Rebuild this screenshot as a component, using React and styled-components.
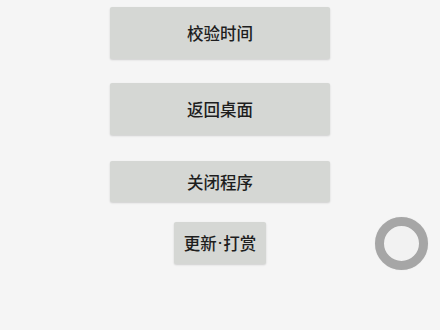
import React from 'react';
import styled, {createGlobalStyle} from 'styled-components';

const Global = createGlobalStyle`
    html, body {
        margin: 0;
        padding: 0;
        background: #f5f5f5;
    }
    body {
        font-family: "Roboto", "Noto Sans CJK SC", sans-serif;
    }
`;

const Page = styled.div`
    position: relative;
    width: 440px;
    height: 330px;
    overflow: hidden;
    background: #f5f5f5;
`;

const Menu = styled.div`
    display: flex;
    flex-direction: column;
    align-items: center;
    padding-top: 7px;
`;

const ActionButton = styled.button`
    display: flex;
    align-items: center;
    justify-content: center;
    width: ${p => p.width}px;
    height: ${p => p.height}px;
    margin-bottom: ${p => p.gap || 0}px;
    padding: 0;
    border: none;
    border-radius: 2px;
    background: #d5d7d4;
    box-shadow: 0 1px 2px rgba(0, 0, 0, 0.16);
    color: #1e1e1e;
    font-family: "Noto Sans CJK SC", sans-serif;
    font-size: 16.5px;
    font-weight: 500;
    cursor: pointer;
`;

const Dot = styled.span`
    font-family: "Roboto", sans-serif;
    margin: 0 1px;
`;

const FloatRing = styled.div`
    position: absolute;
    left: 375px;
    top: 217px;
    width: 53px;
    height: 53px;
    box-sizing: border-box;
    border-radius: 50%;
    border: 9px solid #a6a6a6;
    background: #f2f2f2;
    box-shadow: 0 0 1px rgba(0, 0, 0, 0.15);
`;

export default function App() {
    return (
        <Page>
            <Global/>
            <Menu>
                <ActionButton width={220} height={52} gap={24}>校验时间</ActionButton>
                <ActionButton width={220} height={52} gap={26}>返回桌面</ActionButton>
                <ActionButton width={220} height={41} gap={20}>关闭程序</ActionButton>
                <ActionButton width={92} height={42}>更新<Dot>·</Dot>打赏</ActionButton>
            </Menu>
            <FloatRing/>
        </Page>
    );
}
